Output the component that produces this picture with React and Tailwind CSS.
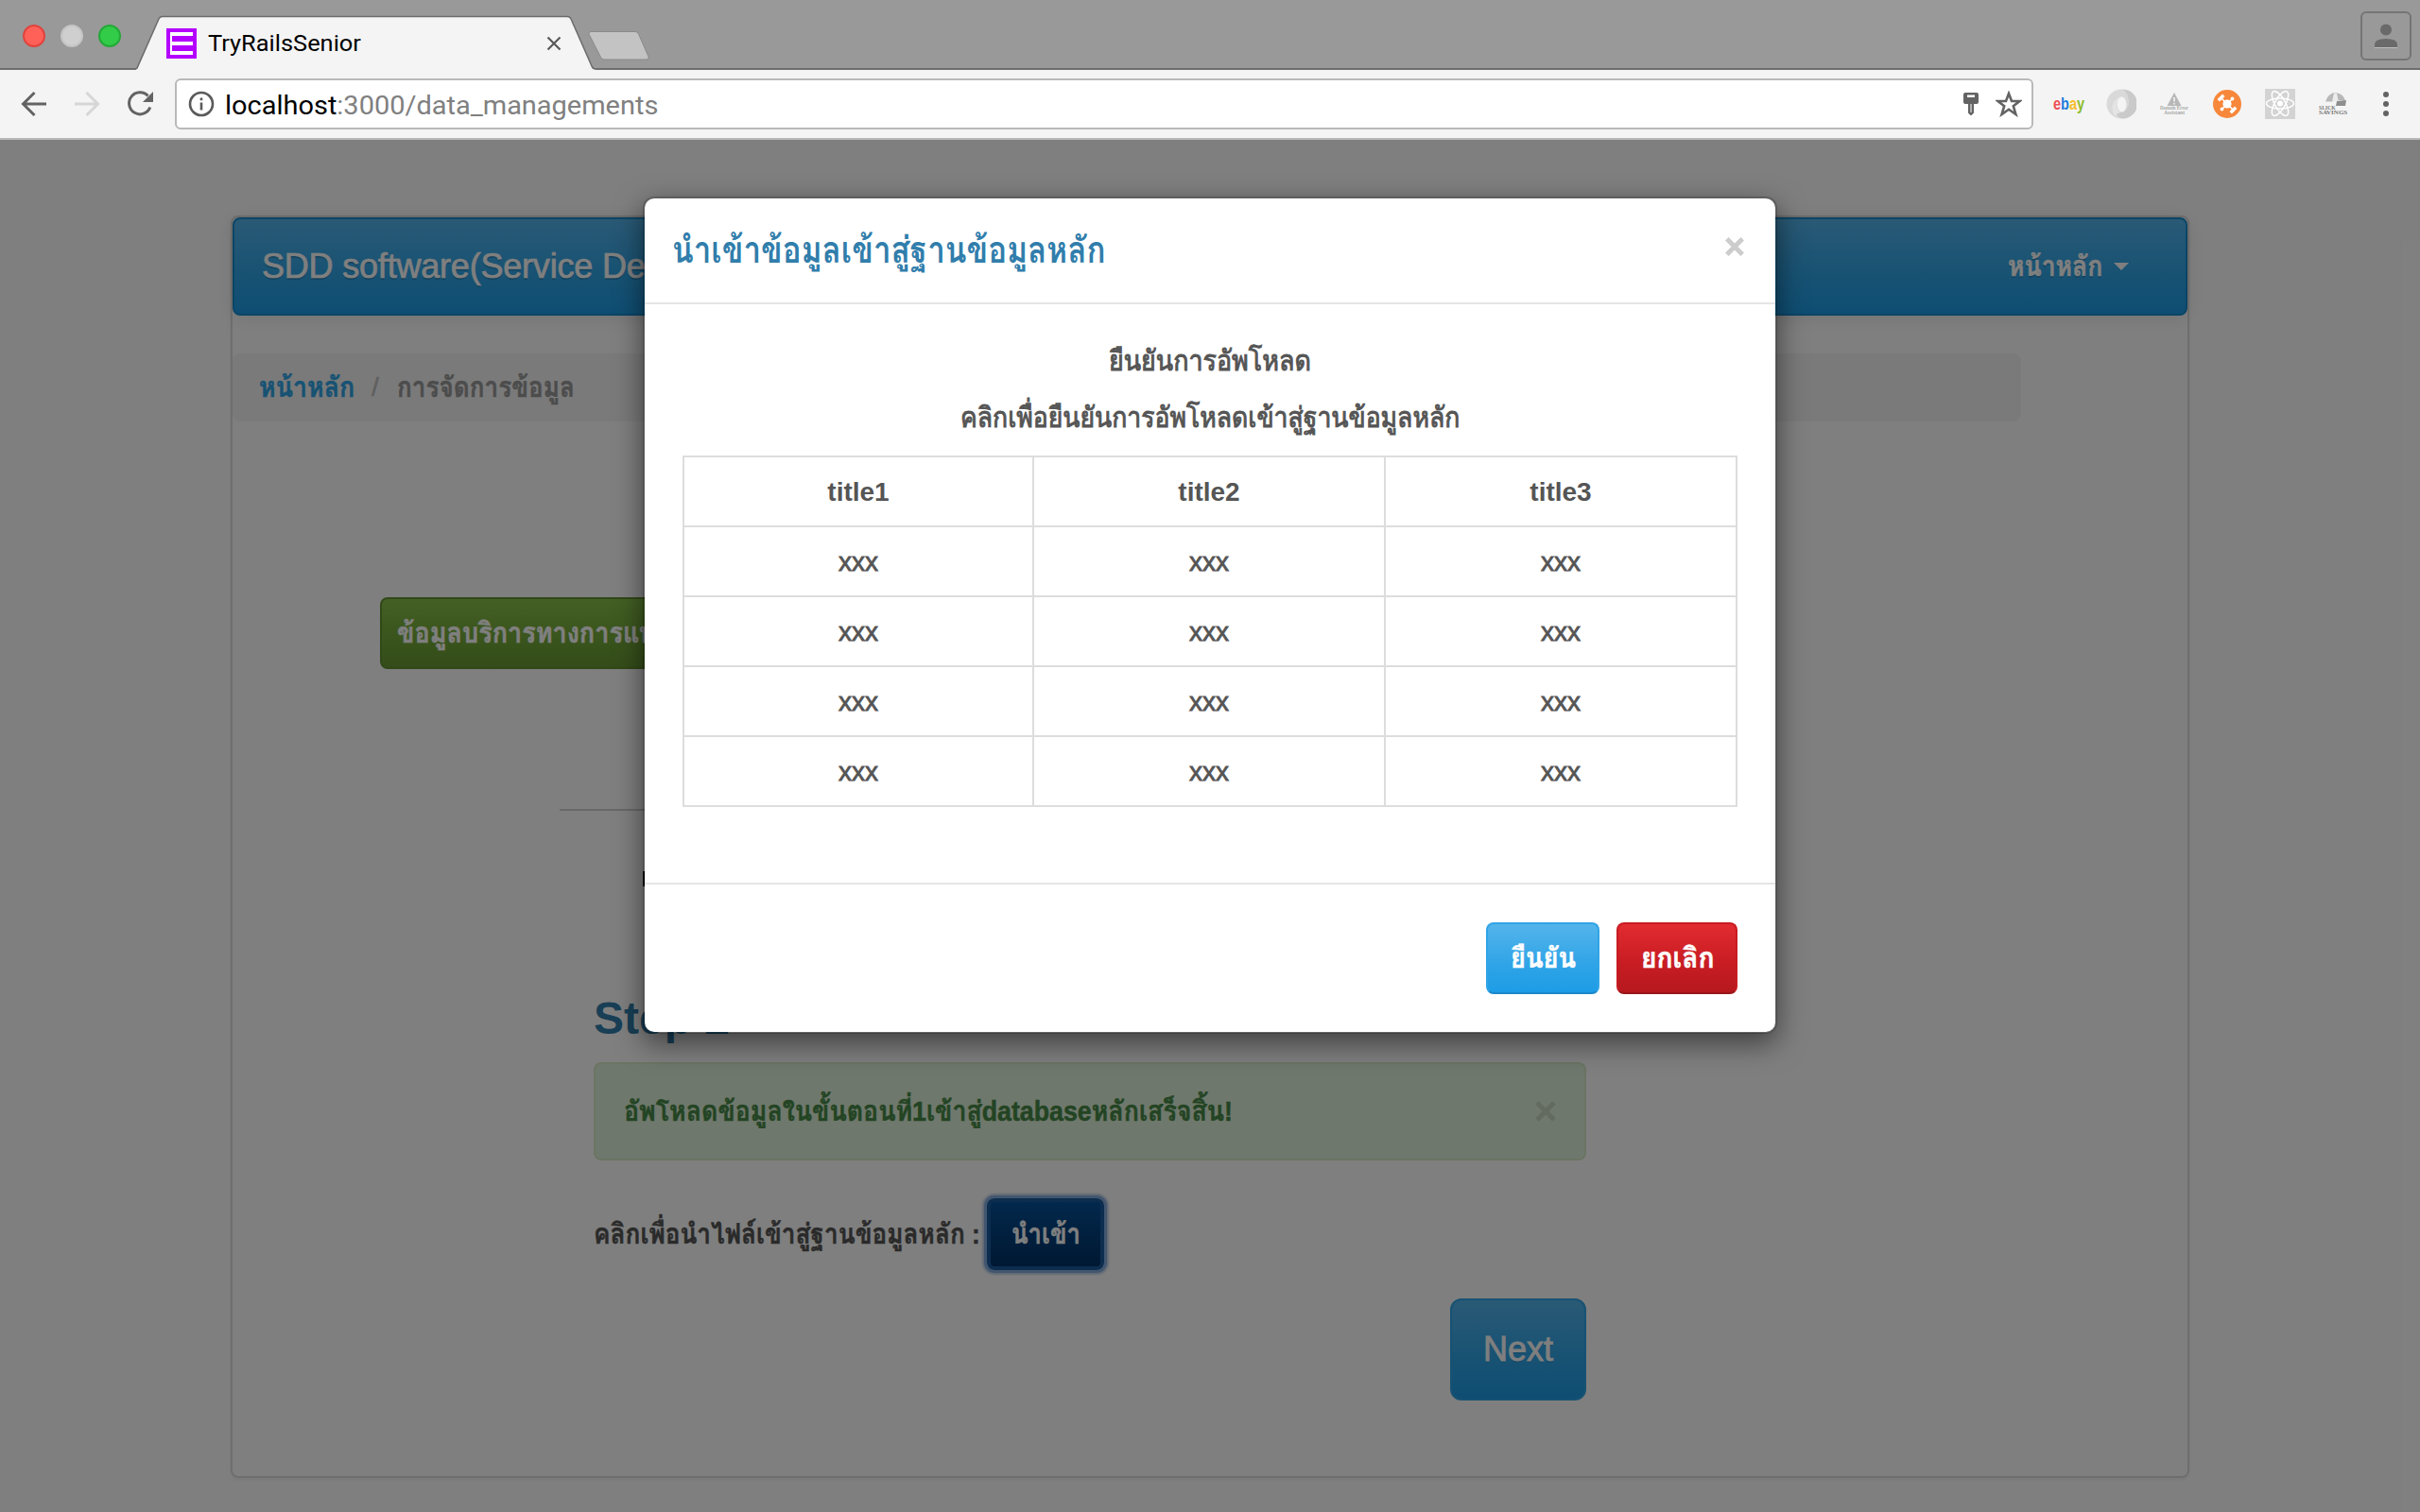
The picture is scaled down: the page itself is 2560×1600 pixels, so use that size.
import { useLayoutEffect, useRef, useState } from "react";

/* Text run that is condensed or widened to an exact advance width. */
function Fit({ w, className = "", children }) {
  const ref = useRef(null);
  const [scale, setScale] = useState(1);
  useLayoutEffect(() => {
    setScale(w / ref.current.offsetWidth);
  }, [w]);
  return (
    <span className={`inline-block whitespace-nowrap ${className}`} style={{ width: w }}>
      <span ref={ref} className="inline-block origin-left" style={{ transform: `scaleX(${scale})` }}>
        {children}
      </span>
    </span>
  );
}

/* Slightly heavier, taller setting used for Thai labels. */
function Thai({ w, className = "", children }) {
  return (
    <Fit w={w} className={`leading-10 [-webkit-text-stroke-width:0.5px] ${className}`}>
      {children}
    </Fit>
  );
}

function TabStrip() {
  return (
    <div className="flex h-[74px] bg-[#999999] border-b-2 border-[#6e6e6e]">
      <div className="flex gap-4 pl-6 pt-[26px] w-[144px]">
        <span className="size-6 rounded-full bg-[#ff6159] border-2 border-[#e0443e]" />
        <span className="size-6 rounded-full bg-[#cfcfcf] border-2 border-[#c4c4c4]" />
        <span className="size-6 rounded-full bg-[#32cc48] border-2 border-[#23a938]" />
      </div>
      <div className="relative w-[546px] h-[74px]">
        <svg className="absolute inset-0" width="546" height="74" viewBox="0 0 546 74">
          <path d="M0 74V73L1 72.500L24 20Q25 17.500 28 17.500H456Q459 17.500 460 20L482 70Q483 73 486 73V74Z" fill="#f4f4f4" />
          <path d="M0 73L1 72L24 20Q25 17.500 28 17.500H456Q459 17.500 460 20L482 70Q483 73 486 73" fill="none" stroke="#6b6b6b" strokeWidth="1.500" />
          <path d="M481 33.500H528Q530.500 33.500 531.500 36L542 60Q543 63 540 63H495Q492.500 63 491.500 60.500L479 36Q478.500 33.500 481 33.500Z" fill="#c3c3c3" stroke="#8a8a8a" strokeWidth="1" />
        </svg>
        <div className="relative flex items-center pl-8 pt-[17px] h-[74px] w-[480px]">
          <svg width="32" height="32" viewBox="0 0 32 32">
            <rect width="32" height="32" fill="#b400ff" />
            <path d="M4 4H28V8H6V14H28V18H6V24H28V28H4Z" fill="#fff" />
          </svg>
          <Fit w={162} className="ml-3 font-[Roboto] text-[24px] leading-8 text-black">TryRailsSenior</Fit>
          <svg className="ml-[196px]" width="16" height="16" viewBox="0 0 16 16" stroke="#5a5a5a" strokeWidth="2.200">
            <path d="M1.500 1.500L14.500 14.500M14.500 1.500L1.500 14.500" />
          </svg>
        </div>
      </div>
      <div className="ml-auto mr-[9px] mt-3 flex h-[52px] w-[54px] items-center justify-center rounded-md border-2 border-[#757575]">
        <svg width="24" height="26" viewBox="0 0 24 26" fill="#6a6a6a">
          <circle cx="12" cy="6.500" r="6" />
          <path d="M0 25V22Q0 16 12 16T24 22V25Z" />
          <path d="M0 25.500H24" stroke="#c0c0c0" />
        </svg>
      </div>
    </div>
  );
}

function Extensions() {
  return (
    <div className="flex items-center">
      <div className="ml-[21px] w-8 pt-[1px] text-center">
        <Fit w={33} className="font-[Liberation_Sans] text-[18px] leading-5 font-bold">
          <span className="text-[#ee4f58]">e</span>
          <span className="text-[#1c7ddc]">b</span>
          <span className="text-[#f7bd2a]">a</span>
          <span className="text-[#8dbd2a]">y</span>
        </Fit>
      </div>
      <svg className="ml-6" width="32" height="32" viewBox="0 0 32 32" fill="none">
        <circle cx="16" cy="16" r="15.500" fill="#d9d9d9" />
        <path d="M18 .5A15.500 15.500 0 0 1 17 31.500C9 29 6 19 12 9C10 17 12 24 18 25C27 19 25 7 18 .5Z" fill="#cacaca" />
        <path d="M12 31C3 25 5 9 19 7.500C15 8 12 11 11.500 16C11 21 13 24 16 25C10 26 9 28 12 31Z" fill="#e4e4e4" />
        <ellipse cx="16.500" cy="16.500" rx="4.800" ry="8" fill="#f4f4f4" />
      </svg>
      <div className="ml-[25px] flex w-[30px] flex-col items-center">
        <svg width="16" height="14" viewBox="0 0 16 14">
          <path d="M8 0L15.500 14H.5Z" fill="#b8b8b8" />
          <path d="M8 5V9.500M8 11V12.500" stroke="#f4f4f4" strokeWidth="1.600" />
        </svg>
        <div className="flex flex-col items-center font-[Liberation_Serif] text-[7px] leading-[5px] font-bold text-[#a8a8a8]">
          <Fit w={30}>Domain Error</Fit>
          <Fit w={22}>Assistant</Fit>
        </div>
      </div>
      <svg className="ml-[26px]" width="30" height="30" viewBox="0 0 30 30">
        <circle cx="15" cy="15" r="15" fill="#f7873b" />
        <circle cx="15" cy="15" r="4.600" fill="#fff" />
        <path d="M9.500 20.500L20.500 9.500M9 9L21 21" stroke="#fff" strokeWidth="1.600" />
        <path d="M5.800 11.300L11.300 5.800M18.700 24.200L24.200 18.700" stroke="#fff" strokeWidth="3.400" />
        <circle cx="20.500" cy="9.500" r="1.900" fill="#fff" />
        <circle cx="9.500" cy="20.500" r="1.900" fill="#fff" />
      </svg>
      <svg className="ml-[25px]" width="32" height="32" viewBox="0 0 32 32">
        <rect width="32" height="32" fill="#d3d3d3" />
        <g fill="none" stroke="#fff" strokeWidth="1.500">
          <ellipse cx="16" cy="15.500" rx="14.500" ry="5.500" />
          <ellipse cx="16" cy="15.500" rx="14.500" ry="5.500" transform="rotate(60 16 15.500)" />
          <ellipse cx="16" cy="15.500" rx="14.500" ry="5.500" transform="rotate(120 16 15.500)" />
        </g>
        <circle cx="16" cy="15.500" r="3" fill="#fff" />
      </svg>
      <div className="ml-[25px] flex w-[30px] flex-col items-start">
        <svg width="30" height="14" viewBox="0 0 30 14">
          <path d="M7 9.500Q10 0 18 0Q26 1 28 8.500L20 8L14 9.500Z" fill="#b8b8b8" />
          <path d="M16 .5L19 .5L20.500 8.500L14 9.500Z" fill="#ececec" />
          <path d="M19 9L29 8L28 14H18Z" fill="#8e8e8e" />
        </svg>
        <div className="flex flex-col font-[Liberation_Serif] text-[7px] leading-[5px] font-bold text-[#777777]">
          <Fit w={18}>SLICK</Fit>
          <Fit w={30}>SAVINGS</Fit>
        </div>
      </div>
      <svg className="ml-[38px]" width="6" height="28" viewBox="0 0 6 28" fill="#636363">
        <circle cx="3" cy="4" r="3" />
        <circle cx="3" cy="14" r="3" />
        <circle cx="3" cy="24" r="3" />
      </svg>
    </div>
  );
}

function Toolbar() {
  return (
    <div className="flex h-[74px] items-center border-b-2 border-[#b9b9b9] bg-[#f4f4f4]">
      <svg className="ml-[22px]" width="28" height="28" viewBox="0 0 28 28" fill="none" stroke="#636363" strokeWidth="3">
        <path d="M27 14H3M14.500 2L2.500 14L14.500 26" />
      </svg>
      <svg className="ml-7" width="28" height="28" viewBox="0 0 28 28" fill="none" stroke="#d6d6d6" strokeWidth="3">
        <path d="M1 14H25M13.500 2L25.500 14L13.500 26" />
      </svg>
      <svg className="ml-7" width="30" height="28" viewBox="0 0 30 28">
        <path d="M22.500 5.500A11.500 11.500 0 1 0 24.800 17.500" fill="none" stroke="#636363" strokeWidth="3" />
        <path d="M28 1V12H17Z" fill="#636363" />
      </svg>
      <div className="ml-[21px] flex h-[54px] w-[1966px] items-center rounded-md border-2 border-[#b9b9b9] bg-white pl-3 pr-[10px]">
        <svg width="28" height="28" viewBox="0 0 28 28" fill="none" stroke="#5a5a5a" strokeWidth="2.600">
          <circle cx="14" cy="14" r="12" />
          <path d="M14 12.500V20.500M14 7.500V10.200" />
        </svg>
        <Fit w={458} className="ml-[11px] pt-[3px] font-[Roboto] text-[28px] leading-9 text-[#808080]">
          <span className="text-black">localhost</span>:3000/data_managements
        </Fit>
        <svg className="ml-auto" width="16" height="26" viewBox="0 0 16 26" fill="#636363">
          <path d="M2 1H14Q16 1 16 3V11Q16 13 14 13H11V22.500L8.500 25H7.500L5 22.500V13H2Q0 13 0 11V3Q0 1 2 1ZM4 3.500V6H12V3.500Z" fillRule="evenodd" />
          <path d="M8 13V22" stroke="#fff" strokeWidth="1" />
        </svg>
        <svg className="ml-[18px]" width="28" height="28" viewBox="0 0 28 28" fill="none" stroke="#636363" strokeWidth="2.600">
          <path d="M14 3L17 11H25.500L18.800 16.200L21.400 25L14 19.800L6.600 25L9.200 16.200L2.500 11H11Z" />
        </svg>
      </div>
      <Extensions />
    </div>
  );
}

function Page() {
  return (
    <div className="px-[244px] pt-20">
      <div className="h-[1336px] rounded-lg border-2 border-[#dddddd] shadow-[0_2px_4px_rgba(0,0,0,0.06)]">
        <nav className="flex h-[104px] items-center rounded-lg border-2 border-[#178acc] bg-[linear-gradient(#54b4eb,#2fa4e7_60%,#1d9ce5)] pl-[29px] text-white shadow-[0_2px_20px_rgba(0,0,0,0.1)] [text-shadow:0_2px_0_rgba(0,0,0,0.2)]">
          <span className="text-[36px] leading-[48px] tracking-[-0.2px] whitespace-nowrap [-webkit-text-stroke:0.7px_#fff]">SDD software(Service Desk)</span>
          <Thai w={100} className="ml-auto text-[30px] font-bold">หน้าหลัก</Thai>
          <svg className="ml-3 mr-[60px]" width="16" height="8" viewBox="0 0 16 8"><path d="M0 0H16L8 8Z" fill="#fff" /></svg>
        </nav>
        <div className="mt-10 flex h-[72px] w-[1892px] items-center rounded-lg bg-[#f5f5f5] pl-[28px] text-[30px] leading-10">
          <Thai w={101} className="font-bold text-[#2fa4e7]">หน้าหลัก</Thai>
          <span className="ml-[18px] text-[28px] text-[#c0c0c0] [-webkit-text-stroke:0.6px_#c0c0c0]">/</span>
          <Thai w={188} className="ml-[19px] text-[#999999] font-semibold">การจัดการข้อมูล</Thai>
        </div>
        <div className="mt-[186px] ml-[156px] flex h-[76px] w-[500px] items-center rounded-lg border-2 border-[#629030] bg-[linear-gradient(#88c149,#73a839_60%,#699934)] pl-[16px] text-[30px] text-white">
          <Thai w={308} className="font-bold">ข้อมูลบริการทางการแพทย์</Thai>
        </div>
        <div className="mt-[148px] ml-[346px] h-[2px] w-[1200px] bg-[#d0d0d0]" />
        <div className="mt-16 ml-[434px] size-4 bg-black" />
        <h1 className="mt-[110px] ml-[382px] text-[48px] leading-[60px] font-bold text-[#317eac]">Step 2</h1>
        <div className="mt-4 ml-[382px] flex h-[104px] w-[1050px] items-center rounded-lg border-2 border-[#d6e9c6] bg-[#dff0d8] pl-[30px] pr-[30px] text-[29px] text-[#468847]">
          <Thai w={644} className="font-bold">อัพโหลดข้อมูลในขั้นตอนที่1เข้าสู่databaseหลักเสร็จสิ้น!</Thai>
          <svg className="ml-auto" width="22" height="22" viewBox="0 0 22 22" stroke="#c6d5be" strokeWidth="5"><path d="M2 2L20 20M20 2L2 20" /></svg>
        </div>
        <div className="mt-10 ml-[382px] flex h-[76px] items-center text-[30px] text-[#555555]">
          <Thai w={409} className="font-bold">คลิกเพื่อนำไฟล์เข้าสู่ฐานข้อมูลหลัก :</Thai>
          <button className="ml-[7px] flex h-[76px] w-[124px] items-center justify-center rounded-lg border-4 border-[#1b5a9e] bg-[linear-gradient(#04519b,#044687_30%,#003166_100%)] text-white shadow-[0_0_0_3px_#84addf,0_0_2px_5px_#c3d3ea]">
            <Thai w={73} className="font-bold">นำเข้า</Thai>
          </button>
        </div>
        <button className="mt-[30px] ml-[1288px] flex h-[108px] w-36 items-center justify-center rounded-xl border-2 border-[#2fa4e7] bg-[linear-gradient(#54b4eb,#2fa4e7_60%,#1d9ce5)] text-[36px] text-white [text-shadow:0_2px_0_rgba(0,0,0,0.1)] [-webkit-text-stroke:0.8px_#fff]">
          Next
        </button>
      </div>
    </div>
  );
}

function Modal() {
  return (
    <div className="absolute left-[680px] top-[60px] h-[886px] w-[1200px] rounded-xl border-2 border-black/20 bg-white bg-clip-padding shadow-[0_10px_30px_rgba(0,0,0,0.5)] text-[28px] text-[#555555]">
      <div className="flex h-28 items-center justify-between border-b-2 border-[#e5e5e5] pl-[29px] pr-[33px]">
        <Fit w={459} className="text-[39px] leading-[52px] font-semibold text-[#317eac]">นำเข้าข้อมูลเข้าสู่ฐานข้อมูลหลัก</Fit>
        <svg className="mb-2" width="20" height="20" viewBox="0 0 20 20" stroke="#cccccc" strokeWidth="5"><path d="M1.800 1.800L18.200 18.200M18.200 1.800L1.800 18.200" /></svg>
      </div>
      <div className="flex h-[614px] flex-col items-center border-b-2 border-[#e5e5e5] px-10 pt-10">
        <Fit w={214} className="text-[30px] leading-10 [-webkit-text-stroke-width:1px]">ยืนยันการอัพโหลด</Fit>
        <Fit w={528} className="mt-5 text-[30px] leading-10 [-webkit-text-stroke-width:1px]">คลิกเพื่อยืนยันการอัพโหลดเข้าสู่ฐานข้อมูลหลัก</Fit>
        <div className="mt-5 grid w-[1116px] grid-cols-[370px_372px_372px] border-t-2 border-l-2 border-[#dddddd] text-center leading-[74px]">
          {["title1", "title2", "title3"].map((t) => (
            <div key={t} className="h-[74px] border-r-2 border-b-2 border-[#dddddd] font-bold">{t}</div>
          ))}
          {Array.from({ length: 12 }, (_, i) => (
            <div key={i} className="h-[74px] border-r-2 border-b-2 border-[#dddddd] [-webkit-text-stroke:0.8px_#555]">xxx</div>
          ))}
        </div>
      </div>
      <div className="flex justify-end gap-[18px] pt-10 pr-10 text-[30px] text-white [text-shadow:0_2px_0_rgba(0,0,0,0.1)]">
        <button className="flex h-[76px] w-[120px] items-center justify-center rounded-lg border-2 border-[#2fa4e7] border-b-[#1b88ca] bg-[linear-gradient(#54b4eb,#2fa4e7_60%,#1d9ce5)]">
          <Thai w={69} className="font-bold">ยืนยัน</Thai>
        </button>
        <button className="flex h-[76px] w-32 items-center justify-center rounded-lg border-2 border-[#c71c22] border-b-[#9a161a] bg-[linear-gradient(#e12b31,#c71c22_60%,#b5191f)]">
          <Thai w={77} className="font-bold">ยกเลิก</Thai>
        </button>
      </div>
    </div>
  );
}

export default function App() {
  return (
    <div className="h-[1600px] w-[2560px] overflow-hidden bg-white font-['Liberation_Sans','Loma','Garuda',sans-serif]">
      <TabStrip />
      <Toolbar />
      <div className="relative h-[1452px] overflow-hidden">
        <Page />
        <div className="absolute inset-0 bg-black/50" />
        <Modal />
      </div>
    </div>
  );
}
